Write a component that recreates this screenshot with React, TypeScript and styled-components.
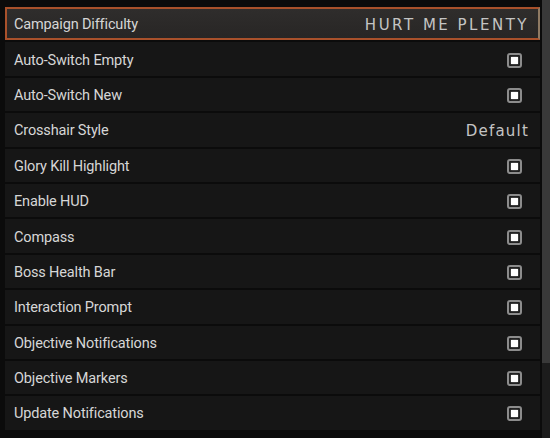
import styled, { createGlobalStyle } from "styled-components";

const GlobalStyle = createGlobalStyle`
  html, body {
    margin: 0;
    padding: 0;
    background: #0b0b0b;
    overflow: hidden;
  }
`;

type Setting = {
  label: string;
  value?: string;
  checked?: boolean;
};

const settings: Setting[] = [
  { label: "Campaign Difficulty", value: "HURT ME PLENTY" },
  { label: "Auto-Switch Empty", checked: true },
  { label: "Auto-Switch New", checked: true },
  { label: "Crosshair Style", value: "Default" },
  { label: "Glory Kill Highlight", checked: true },
  { label: "Enable HUD", checked: true },
  { label: "Compass", checked: true },
  { label: "Boss Health Bar", checked: true },
  { label: "Interaction Prompt", checked: true },
  { label: "Objective Notifications", checked: true },
  { label: "Objective Markers", checked: true },
  { label: "Update Notifications", checked: true },
];

export default function App() {
  return (
    <>
      <GlobalStyle />
      <Screen>
        <List>
          {settings.map((s, i) => (
            <Row key={s.label} $selected={i === 0}>
              <Label>{s.label}</Label>
              {s.value ? (
                <Value $caps={s.value === s.value.toUpperCase()}>
                  {s.value}
                </Value>
              ) : (
                <Checkbox>{s.checked && <CheckMark />}</Checkbox>
              )}
            </Row>
          ))}
        </List>
        <ScrollTrack>
          <ScrollThumb />
        </ScrollTrack>
      </Screen>
    </>
  );
}

const Screen = styled.div`
  width: 550px;
  height: 438px;
  display: flex;
  background: #0b0b0b;
`;

const List = styled.div`
  width: 535px;
  margin-left: 5px;
  padding-top: 7px;
  display: flex;
  flex-direction: column;
  gap: 2px;
`;

const Row = styled.div<{ $selected?: boolean }>`
  height: 33.4px;
  box-sizing: border-box;
  display: flex;
  align-items: center;
  justify-content: space-between;
  padding: 2px 10px 0 7px;
  background: ${(p) =>
    p.$selected
      ? "linear-gradient(180deg, #2f2d2c 0%, #282625 100%)"
      : "#161616"};
  border: 2px solid ${(p) => (p.$selected ? "#a9512b" : "transparent")};
  border-right-color: ${(p) => (p.$selected ? "#8f7a63" : "transparent")};
`;

const Label = styled.span`
  font-family: Roboto, "Liberation Sans", sans-serif;
  font-size: 14.5px;
  color: #d6d6d6;
  letter-spacing: -0.15px;
`;

const Value = styled.span<{ $caps?: boolean }>`
  font-family: "DejaVu Sans", "Liberation Sans", sans-serif;
  font-size: 15px;
  color: #c4c4c4;
  letter-spacing: ${(p) => (p.$caps ? "2.5px" : "1.2px")};
  margin-right: -1px;
`;

const Checkbox = styled.div`
  width: 15px;
  height: 15px;
  box-sizing: border-box;
  border: 2px solid #8c8c8c;
  border-radius: 3px;
  background: #1c1c1c;
  display: flex;
  align-items: center;
  justify-content: center;
  margin-right: 6px;
`;

const CheckMark = styled.div`
  width: 7px;
  height: 7px;
  background: #ffffff;
  box-shadow: 0 0 2px rgba(255, 255, 255, 0.6);
`;

const ScrollTrack = styled.div`
  width: 8px;
  margin-left: 2px;
  height: 100%;
  background: #1c1c1c;
`;

const ScrollThumb = styled.div`
  height: 363px;
  background: #393939;
`;
